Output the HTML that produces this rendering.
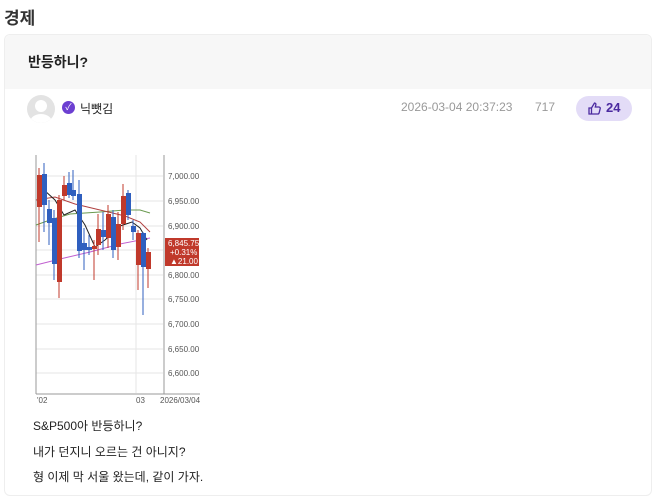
<!DOCTYPE html><html><head><meta charset="utf-8"><style>
body{margin:0;width:660px;height:480px;overflow:hidden;background:#fff;font-family:"Liberation Sans","Noto Sans CJK KR",sans-serif;color:#222}
.h{position:absolute;left:4px;top:4px;font-size:17px;font-weight:bold;color:#333}
.card{position:absolute;left:4px;top:34px;width:646px;height:460px;border:1px solid #eee;border-radius:6px;background:#fff}
.top{height:54px;background:#f7f7f7;border-radius:6px 6px 0 0}
.t{position:absolute;left:23px;top:17px;font-size:14px;font-weight:bold}
.av{position:absolute;left:22px;top:60px;width:28px;height:28px;border-radius:50%;background:#e3e3e3;overflow:hidden}
.badge{position:absolute;left:57px;top:66px;width:13px;height:13px;border-radius:50%;background:#6c3fd1;color:#fff;font-size:9px;line-height:13px;text-align:center}
.nick{position:absolute;left:75px;top:65px;font-size:12px}
.date{position:absolute;left:396px;top:65px;font-size:12px;color:#999}
.v{position:absolute;left:530px;top:65px;font-size:12px;color:#999}
.like{position:absolute;left:571px;top:61px;width:56px;height:25px;border-radius:13px;background:#e3dcf7;color:#4b2aa0;font-size:13px;font-weight:bold}
.p{position:absolute;left:33px;font-size:12px;color:#222}
</style></head><body>
<div class="h">경제</div>
<div class="card"><div class="top"></div><div class="t">반등하니?</div>
<div class="av"><div style="position:absolute;left:8px;top:5px;width:12px;height:12px;border-radius:50%;background:#fff"></div><div style="position:absolute;left:3px;top:19px;width:22px;height:16px;border-radius:50%;background:#fff"></div></div>
<div class="badge">✓</div><div class="nick">닉뺏김</div>
<div class="date">2026-03-04 20:37:23</div><div class="v">717</div>
<div class="like"><svg style="position:absolute;left:12px;top:6px" width="13" height="13" viewBox="0 0 13 13" fill="none" stroke="#4b2aa0" stroke-width="1.3"><path d="M1 6h2.5v6H1zM3.5 6l3-5c1 0 1.6.8 1.3 2L7.3 5H11c.9 0 1.4.8 1.2 1.6l-1.1 4.4c-.2.6-.7 1-1.3 1H3.5"/></svg><span style="position:absolute;left:30px;top:4px">24</span></div>
</div>
<svg style="position:absolute;left:0;top:0" width="210" height="410" font-family="Liberation Sans" font-size="8" fill="#555">
<g stroke="#e6e6e6" stroke-width="1"><line x1="36" y1="176" x2="163" y2="176"/><line x1="36" y1="201" x2="163" y2="201"/><line x1="36" y1="226" x2="163" y2="226"/><line x1="36" y1="250" x2="163" y2="250"/><line x1="36" y1="275" x2="163" y2="275"/><line x1="36" y1="299" x2="163" y2="299"/><line x1="36" y1="324" x2="163" y2="324"/><line x1="36" y1="349" x2="163" y2="349"/><line x1="36" y1="373" x2="163" y2="373"/><line x1="136" y1="155" x2="136" y2="393"/></g>
<g stroke="#999"><line x1="36" y1="155" x2="36" y2="394"/><line x1="164" y1="155" x2="164" y2="394"/><line x1="36" y1="394" x2="200" y2="394"/></g>
<polyline fill="none" stroke="#c060d0" points="36,265 60,259 90,252 120,244 150,238"/>
<polyline fill="none" stroke="#6a9a50" points="36,225 50,220 70,214 100,212 125,210 140,210 150,213"/>
<polyline fill="none" stroke="#b04040" points="36,200 55,197 75,204 100,210 125,216 140,222 150,232"/>
<polyline fill="none" stroke="#222" points="44,190 55,200 64,215 75,210 85,225 95,247 105,240 120,226 132,222 140,228 147,240"/>
<g id="c">
<line x1="39" y1="168" x2="39" y2="242" stroke="#c0392b"/><rect x="37" y="175" width="5" height="32" fill="#c0392b"/>
<line x1="44" y1="163" x2="44" y2="232" stroke="#2f5fbf"/><rect x="42" y="174" width="5" height="31" fill="#2f5fbf"/>
<line x1="49" y1="200" x2="49" y2="245" stroke="#2f5fbf"/><rect x="47" y="209" width="5" height="14" fill="#2f5fbf"/>
<line x1="54" y1="210" x2="54" y2="280" stroke="#2f5fbf"/><rect x="52" y="218" width="5" height="46" fill="#2f5fbf"/>
<line x1="59" y1="195" x2="59" y2="298" stroke="#c0392b"/><rect x="57" y="200" width="5" height="82" fill="#c0392b"/>
<line x1="64" y1="176" x2="64" y2="200" stroke="#c0392b"/><rect x="62" y="185" width="5" height="11" fill="#c0392b"/>
<line x1="69" y1="172" x2="69" y2="198" stroke="#2f5fbf"/><rect x="67" y="183" width="5" height="12" fill="#2f5fbf"/>
<line x1="73" y1="170" x2="73" y2="200" stroke="#2f5fbf"/><rect x="71" y="190" width="5" height="6" fill="#2f5fbf"/>
<line x1="79" y1="180" x2="79" y2="258" stroke="#2f5fbf"/><rect x="77" y="194" width="5" height="57" fill="#2f5fbf"/>
<line x1="84" y1="228" x2="84" y2="270" stroke="#2f5fbf"/><rect x="82" y="243" width="5" height="7" fill="#2f5fbf"/>
<line x1="89" y1="235" x2="89" y2="255" stroke="#2f5fbf"/><rect x="87" y="247" width="5" height="3" fill="#2f5fbf"/>
<line x1="94" y1="240" x2="94" y2="280" stroke="#c0392b"/><rect x="92" y="246" width="5" height="3" fill="#c0392b"/>
<line x1="98" y1="214" x2="98" y2="255" stroke="#c0392b"/><rect x="96" y="229" width="5" height="16" fill="#c0392b"/>
<line x1="103" y1="212" x2="103" y2="250" stroke="#2f5fbf"/><rect x="101" y="230" width="5" height="7" fill="#2f5fbf"/>
<line x1="108" y1="205" x2="108" y2="248" stroke="#c0392b"/><rect x="106" y="214" width="5" height="24" fill="#c0392b"/>
<line x1="113" y1="210" x2="113" y2="258" stroke="#2f5fbf"/><rect x="111" y="217" width="5" height="33" fill="#2f5fbf"/>
<line x1="118" y1="212" x2="118" y2="260" stroke="#c0392b"/><rect x="116" y="224" width="5" height="23" fill="#c0392b"/>
<line x1="123" y1="184" x2="123" y2="230" stroke="#c0392b"/><rect x="121" y="196" width="5" height="28" fill="#c0392b"/>
<line x1="128" y1="190" x2="128" y2="220" stroke="#2f5fbf"/><rect x="126" y="193" width="5" height="22" fill="#2f5fbf"/>
<line x1="133" y1="220" x2="133" y2="240" stroke="#2f5fbf"/><rect x="131" y="226" width="5" height="6" fill="#2f5fbf"/>
<line x1="138" y1="230" x2="138" y2="290" stroke="#c0392b"/><rect x="136" y="233" width="5" height="32" fill="#c0392b"/>
<line x1="143" y1="232" x2="143" y2="315" stroke="#2f5fbf"/><rect x="141" y="233" width="5" height="34" fill="#2f5fbf"/>
<line x1="148" y1="248" x2="148" y2="288" stroke="#c0392b"/><rect x="146" y="252" width="5" height="17" fill="#c0392b"/>
</g>
<g fill="#555"><text x="168" y="179">7,000.00</text><text x="168" y="204">6,950.00</text><text x="168" y="229">6,900.00</text><text x="168" y="278">6,800.00</text><text x="168" y="302">6,750.00</text><text x="168" y="327">6,700.00</text><text x="168" y="352">6,650.00</text><text x="168" y="376">6,600.00</text>
<text x="37" y="403">'02</text><text x="136" y="403">03</text><text x="160" y="403">2026/03/04</text></g>
<rect x="165" y="238" width="34" height="28" fill="#c0392b"/>
<g fill="#fff"><text x="168" y="246">6,845.75</text><text x="170" y="255">+0.31%</text><text x="170" y="264">▲21.00</text></g>
</svg>
<div class="p" style="top:417px">S&amp;P500아 반등하니?</div>
<div class="p" style="top:443px">내가 던지니 오르는 건 아니지?</div>
<div class="p" style="top:468px">형 이제 막 서울 왔는데, 같이 가자.</div>
</body></html>
